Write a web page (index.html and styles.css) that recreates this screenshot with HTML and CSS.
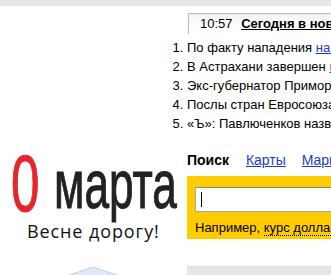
FILE: index.html
```html
<!DOCTYPE html>
<html lang="ru">
<head>
    <meta charset="UTF-8">
    <title>Яндекс</title>
    <link rel="stylesheet" href="styles.css">
</head>
<body>
    <div class="topbar"></div>
    <div class="page">
        <!-- left: holiday logo -->
        <div class="left">
            <div class="logo">
                <span class="logo-num">0</span>
                <span class="logo-word">марта</span>
            </div>
            <div class="logo-sub">Весне дорогу!</div>
            <svg class="roof" width="54" height="10" viewBox="0 0 54 10">
                <polygon points="0,10 27,1 54,10" fill="#dfe8f4" stroke="#c6d6ea" stroke-width="1"/>
            </svg>
        </div>

        <!-- right: news and search -->
        <div class="right">
            <div class="news-tab">
                <span class="time">10:57</span>
                <a class="news-title" href="#">Сегодня в новостях</a>
            </div>
            <ol class="news">
                <li>По факту нападения <a href="#">на журналиста</a></li>
                <li>В Астрахани завершен <a href="#">подсчёт</a></li>
                <li>Экс-губернатор Приморья</li>
                <li>Послы стран Евросоюза</li>
                <li>«Ъ»: Павлюченков назвал</li>
            </ol>

            <div class="tabs">
                <b>Поиск</b>
                <a href="#">Карты</a>
                <a href="#">Маркет</a>
            </div>
            <div class="search">
                <div class="input"><span class="caret"></span></div>
                <div class="hint">Например, <span class="dotted">курс доллара</span></div>
            </div>
            <div class="panel"></div>
        </div>
    </div>
</body>
</html>
```

FILE: styles.css
```css
html, body {
    margin: 0;
    padding: 0;
    overflow: hidden;
    background: #fff;
}
body {
    width: 331px;
    height: 275px;
    font-family: "Liberation Sans", Arial, sans-serif;
    font-size: 13px;
    color: #000;
}
a {
    color: #1a3dc1;
}
.topbar {
    height: 6px;
    background: #e7e7eb;
}
.page {
    display: flex;
    align-items: flex-start;
}
.left {
    width: 187px;
    flex: none;
    padding-top: 142px;
    display: flex;
    flex-direction: column;
    align-items: flex-start;
}
.logo {
    display: flex;
    align-items: flex-end;
    height: 72px;
    margin-left: 11px;
}
.logo-num {
    color: #e4262c;
    font-size: 80px;
    line-height: 72px;
    display: inline-block;
    transform: scaleX(0.64);
    transform-origin: left bottom;
    width: 33px;
    -webkit-text-stroke: 1px #e4262c;
}
.logo-word {
    color: #222;
    font-size: 68px;
    line-height: 72px;
    display: inline-block;
    transform: scaleX(0.65);
    transform-origin: left bottom;
    margin-left: 10px;
    width: 124px;
    -webkit-text-stroke: 1px #222;
}
.logo-sub {
    font-family: "Open Sans", sans-serif;
    font-size: 18px;
    letter-spacing: 0.9px;
    line-height: 22px;
    margin: 0 0 0 27px;
    color: #111;
}
.roof {
    display: block;
    margin: 24px 0 0 66px;
}
.right {
    flex: none;
    width: 400px;
    padding-top: 7px;
}
.news-tab {
    margin-left: 1px;
    height: 20px;
    line-height: 20px;
    padding-left: 11px;
    border-top: 1px solid #b8b8b8;
    border-left: 1px solid #b8b8b8;
    background: linear-gradient(#f2f2f2, #fff 60%);
    white-space: nowrap;
}
.time {
    margin-right: 5px;
}
.news-title {
    color: #000;
    font-weight: bold;
}
.news {
    margin: 4px 0 0;
    padding-left: 0;
    list-style-position: outside;
    line-height: 19px;
    white-space: nowrap;
}
.news li {
    padding-left: 0;
}
.tabs {
    margin-top: 18px;
    font-size: 14px;
    line-height: 18px;
    white-space: nowrap;
}
.tabs b {
    margin-right: 13px;
}
.tabs a {
    margin-right: 12px;
}
.search {
    margin-top: 7px;
    background: #ffcc00;
    height: 63px;
    padding: 11px 0 0 8px;
    box-sizing: border-box;
}
.input {
    height: 25px;
    background: #fff;
    border: 1px solid #a8a8a8;
    border-top-color: #8a8a8a;
    box-sizing: border-box;
    position: relative;
}
.caret {
    position: absolute;
    left: 5px;
    top: 4px;
    width: 1px;
    height: 15px;
    background: #000;
}
.hint {
    margin-top: 7px;
    line-height: 18px;
    white-space: nowrap;
}
.dotted {
    border-bottom: 1px dotted #000;
}
.panel {
    margin-top: 27px;
    height: 30px;
    background: #e3e7ec;
    border-top: 1px solid #d8dde3;
}
```
